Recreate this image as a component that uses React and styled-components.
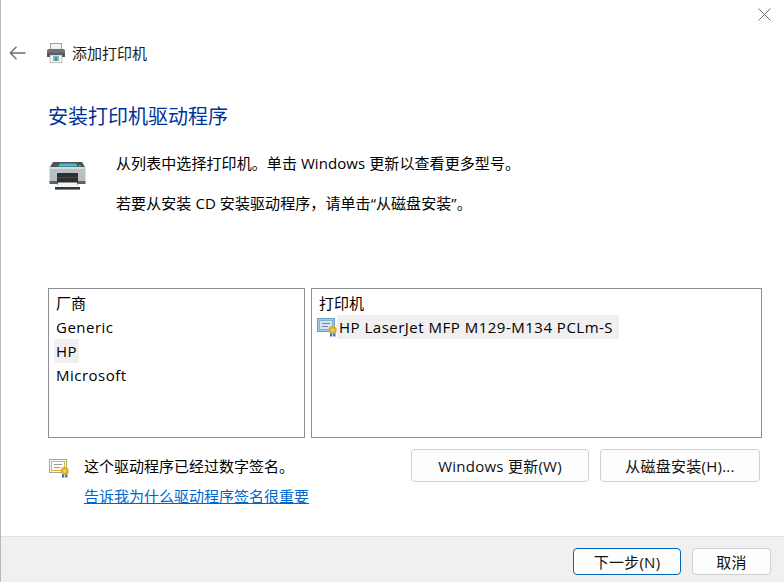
import React from "react";
import styled, { createGlobalStyle } from "styled-components";

const Global = createGlobalStyle`
  html, body { margin: 0; padding: 0; background: #fff; }
  body { font-family: "Open Sans", "Noto Sans CJK SC", sans-serif; color: #000; }
`;

const Dialog = styled.div`
  width: 784px; height: 582px; box-sizing: border-box;
  display: flex; flex-direction: column;
  border-left: 1px solid #b9b9b9; background: #fff; overflow: hidden;
`;
const Main = styled.div`flex: 1; display: flex; flex-direction: column; min-height: 0;`;
const TitleRow = styled.div`display: flex; justify-content: flex-end; height: 36px; padding: 8px 13px 0 0; box-sizing: border-box;`;
const CloseBtn = styled.div`width: 13px; height: 13px; color: #6f6f6f; display: flex;`;
const NavRow = styled.div`display: flex; align-items: center; height: 34px; padding-left: 8px;`;
const BackBtn = styled.div`width: 19px; height: 16px; display: flex; align-items: center; color: #6d6d6d; margin-right: 18px;`;
const NavIcon = styled.div`width: 20px; height: 20px; display: flex; margin-right: 6px;`;
const NavTitle = styled.div`font-size: 15px; line-height: 20px; color: #1c1c1c;`;
const Heading = styled.h1`margin: 33px 0 0 47px; font-size: 20px; line-height: 28px; font-weight: 400; color: #003399;`;
const Intro = styled.div`display: flex; margin: 22px 0 0 48px;`;
const BigIcon = styled.div`width: 37px; height: 28px; margin: 9px 30px 0 0; display: flex;`;
const IntroText = styled.div`display: flex; flex-direction: column; gap: 20px; font-size: 15px; line-height: 20px; letter-spacing: .08px;`;
const Lists = styled.div`display: flex; gap: 6px; margin: 75px 0 0 47px;`;
const ListBox = styled.div`
  width: ${p => p.$w}px; height: 150px; box-sizing: border-box; border: 1px solid #8f8f93;
  padding-top: 2px; font-size: 15px; line-height: 24px; letter-spacing: .5px;
`;
const ListHead = styled.div`height: 24px; padding-left: 7px; letter-spacing: 0;`;
const Row = styled.div`height: 24px; padding-left: 7px;`;
const Selected = styled.span`display: inline-block; margin-left: -2px; padding: 0 2px; background: #f0f0f0; ${p => p.$w ? `width: ${p.$w}px;` : ""} box-sizing: border-box;`;
const DriverRow = styled.div`display: flex; height: 24px; padding-left: 5px;`;
const DriverIcon = styled.div`width: 22px; height: 24px; display: flex; align-items: center;`;
const Below = styled.div`display: flex; justify-content: space-between; margin: 11px 24px 0 48px;`;
const SigBlock = styled.div`display: flex; padding-top: 7px;`;
const SigIcon = styled.div`width: 21px; height: 20px; margin: 3px 14px 0 0; display: flex;`;
const SigText = styled.div`display: flex; flex-direction: column; gap: 10px; font-size: 15px; line-height: 20px;`;
const HelpLink = styled.a`color: #0066cc; text-decoration: underline;`;
const Buttons = styled.div`display: flex; gap: 11px;`;
const Button = styled.button`
  width: ${p => p.$w}px; height: ${p => p.$h || 33}px; padding: 0; box-sizing: border-box;
  background: #fdfdfd; border: 1px solid ${p => p.$primary ? "#0067c0" : "#d0d0d0"}; border-radius: 4px;
  font-family: inherit; font-size: 15px; color: #111; letter-spacing: .25px;
`;
const Footer = styled.div`
  height: 46px; box-sizing: border-box; background: #f0f0f0; border-top: 1px solid #dfdfdf;
  display: flex; justify-content: flex-end; align-items: flex-start; gap: 11px; padding: 11px 13px 0 0;
`;

const CloseIcon = () => (
  <svg width="13" height="13" viewBox="0 0 13 13"><path d="M.5.5l12 12M12.5.5l-12 12" stroke="currentColor" strokeWidth="1" fill="none" /></svg>
);
const ArrowIcon = () => (
  <svg width="17" height="14" viewBox="0 0 17 14"><path d="M7.5.8L1.3 7l6.2 6.2M1.3 7H16.5" stroke="currentColor" strokeWidth="1.4" fill="none" /></svg>
);
const SmallPrinter = () => (
  <svg width="20" height="20" viewBox="0 0 20 20">
    <rect x="4.5" y="0.5" width="11" height="7" fill="#f2f2f2" stroke="#a5a5a5" />
    <rect x="1" y="6" width="18" height="8" rx="1.5" fill="#6f7378" />
    <rect x="1" y="10" width="18" height="4" fill="#54585c" />
    <rect x="4" y="12" width="12" height="7.5" fill="#f4f4f4" stroke="#9a9a9a" strokeWidth=".6" />
    <rect x="7" y="13" width="6" height="5" fill="#7fb6c9" />
    <rect x="9" y="14" width="2" height="4" fill="#3d9f72" />
  </svg>
);
const BigPrinter = () => (
  <svg width="37" height="28" viewBox="0 0 37 28">
    <path d="M4 0H33L36 5H1Z" fill="#4d5358" />
    <path d="M11 1.5H27L29 4.5H9Z" fill="#37c7b4" />
    <path d="M14 2H24L25 3.5H13Z" fill="#5fb0e4" />
    <rect x="30" y="3" width="1.6" height="1.4" fill="#55d040" />
    <rect x="0.5" y="5" width="36" height="15" fill="#b7c0c6" />
    <rect x="0.5" y="5" width="36" height="2" fill="#d5dade" />
    <rect x="0.5" y="19" width="36" height="3" fill="#5d6267" />
    <rect x="8" y="11" width="21" height="13" fill="#2c2e30" />
    <rect x="8" y="15" width="21" height="1" fill="#4a4c4e" />
    <path d="M9 20.5H28L29.5 25H7.5Z" fill="#f3f3f3" />
    <rect x="6" y="25" width="25" height="2.6" fill="#33373a" />
  </svg>
);
const Certificate = ({ frame, fill, accent, lines }) => (
  <svg width="21" height="19" viewBox="0 0 21 19">
    <rect x="0.5" y="0.5" width="17" height="13" fill={fill} stroke={frame} />
    <rect x="2.5" y="2.5" width="13" height="9" fill="#fff" fillOpacity=".5" stroke={accent} />
    <path d="M5 5.5H13M5 8.5H11" stroke={lines} />
    <rect x="13" y="13" width="2.2" height="5.5" fill="#1f6fd0" />
    <rect x="16.2" y="13" width="2.2" height="5.5" fill="#1f6fd0" />
    <circle cx="15.7" cy="12" r="4" fill="#d9ae28" />
    <circle cx="15.7" cy="12" r="1.8" fill="#efd060" />
  </svg>
);

export default function App() {
  return (
    <>
      <Global />
      <Dialog>
        <Main>
          <TitleRow><CloseBtn><CloseIcon /></CloseBtn></TitleRow>
          <NavRow>
            <BackBtn><ArrowIcon /></BackBtn>
            <NavIcon><SmallPrinter /></NavIcon>
            <NavTitle>添加打印机</NavTitle>
          </NavRow>
          <Heading>安装打印机驱动程序</Heading>
          <Intro>
            <BigIcon><BigPrinter /></BigIcon>
            <IntroText>
              <div>从列表中选择打印机。单击 Windows 更新以查看更多型号。</div>
              <div>若要从安装 CD 安装驱动程序，请单击“从磁盘安装”。</div>
            </IntroText>
          </Intro>
          <Lists>
            <ListBox $w={257}>
              <ListHead>厂商</ListHead>
              <Row>Generic</Row>
              <Row><Selected>HP</Selected></Row>
              <Row>Microsoft</Row>
            </ListBox>
            <ListBox $w={451}>
              <ListHead>打印机</ListHead>
              <DriverRow>
                <DriverIcon><Certificate frame="#6e9cc9" fill="#a9c8e4" accent="#7fb0d6" lines="#5f8db5" /></DriverIcon>
                <Selected $w={282}>HP LaserJet MFP M129-M134 PCLm-S</Selected>
              </DriverRow>
            </ListBox>
          </Lists>
          <Below>
            <SigBlock>
              <SigIcon><Certificate frame="#a3a3a3" fill="#f6f6f6" accent="#f0b429" lines="#9a9a9a" /></SigIcon>
              <SigText>
                <div>这个驱动程序已经过数字签名。</div>
                <HelpLink>告诉我为什么驱动程序签名很重要</HelpLink>
              </SigText>
            </SigBlock>
            <Buttons>
              <Button $w={178}>Windows 更新(W)</Button>
              <Button $w={160}>从磁盘安装(H)...</Button>
            </Buttons>
          </Below>
        </Main>
        <Footer>
          <Button $w={108} $h={27} $primary>下一步(N)</Button>
          <Button $w={79} $h={27}>取消</Button>
        </Footer>
      </Dialog>
    </>
  );
}
